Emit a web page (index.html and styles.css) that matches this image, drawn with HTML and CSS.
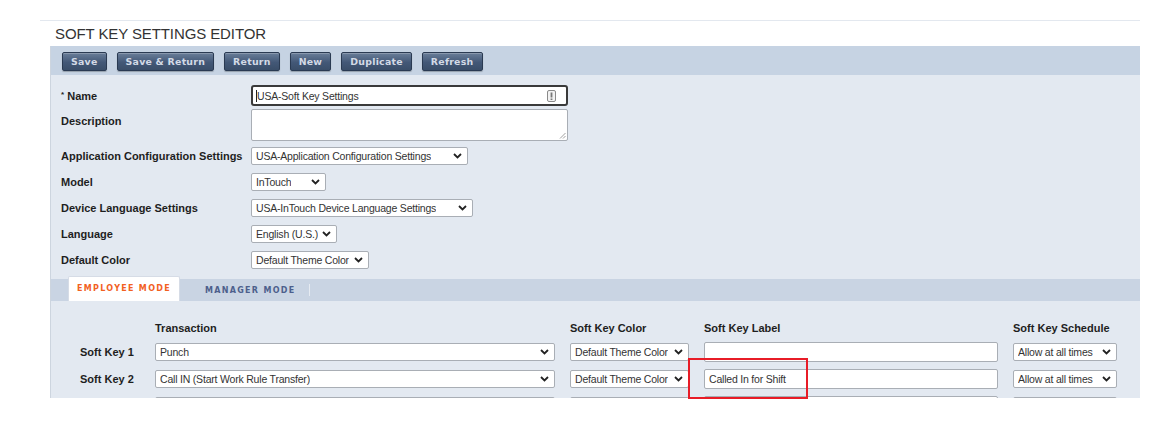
FILE: index.html
```html
<!DOCTYPE html>
<html>
<head>
<meta charset="utf-8">
<link rel="stylesheet" href="styles.css">
</head>
<body>
<div class="page">
  <div class="topline"></div>
  <h1 class="title">SOFT KEY SETTINGS EDITOR</h1>
  <div class="editor">
    <div class="toolbar">
      <button class="btn">Save</button>
      <button class="btn">Save &amp; Return</button>
      <button class="btn">Return</button>
      <button class="btn">New</button>
      <button class="btn">Duplicate</button>
      <button class="btn">Refresh</button>
    </div>
    <div class="body">
      <div class="form">
        <div class="row r-name">
          <div class="lbl"><sup class="req">*</sup> Name</div>
          <div class="txt focused w317">
            <span class="caret"></span><span>USA-Soft Key Settings</span>
            <svg class="kbd" width="9" height="12" viewBox="0 0 9 12"><rect x="0.5" y="0.5" width="8" height="11" rx="1.5" fill="#f2f2f2" stroke="#8a8a8a"/><rect x="3.6" y="2.5" width="1.8" height="5" fill="#777"/><rect x="3.6" y="8.5" width="1.8" height="1.5" fill="#777"/></svg>
          </div>
        </div>
        <div class="row r-desc">
          <div class="lbl">Description</div>
          <div class="area w317">
            <svg class="grip" width="7" height="7" viewBox="0 0 7 7"><path d="M6.5 1L1 6.5M6.5 4L4 6.5" stroke="#a0a0a0" stroke-width="1"/></svg>
          </div>
        </div>
        <div class="row r-sel">
          <div class="lbl">Application Configuration Settings</div>
          <div class="sel w217"><span>USA-Application Configuration Settings</span><svg class="chev" width="9" height="6" viewBox="0 0 9 6"><path d="M1 1l3.5 3.5L8 1" stroke="#222" stroke-width="1.8" fill="none"/></svg></div>
        </div>
        <div class="row r-sel">
          <div class="lbl">Model</div>
          <div class="sel w75"><span>InTouch</span><svg class="chev" width="9" height="6" viewBox="0 0 9 6"><path d="M1 1l3.5 3.5L8 1" stroke="#222" stroke-width="1.8" fill="none"/></svg></div>
        </div>
        <div class="row r-sel">
          <div class="lbl">Device Language Settings</div>
          <div class="sel w222"><span>USA-InTouch Device Language Settings</span><svg class="chev" width="9" height="6" viewBox="0 0 9 6"><path d="M1 1l3.5 3.5L8 1" stroke="#222" stroke-width="1.8" fill="none"/></svg></div>
        </div>
        <div class="row r-sel">
          <div class="lbl">Language</div>
          <div class="sel w86"><span>English (U.S.)</span><svg class="chev" width="9" height="6" viewBox="0 0 9 6"><path d="M1 1l3.5 3.5L8 1" stroke="#222" stroke-width="1.8" fill="none"/></svg></div>
        </div>
        <div class="row r-sel last">
          <div class="lbl">Default Color</div>
          <div class="sel w118"><span>Default Theme Color</span><svg class="chev" width="9" height="6" viewBox="0 0 9 6"><path d="M1 1l3.5 3.5L8 1" stroke="#222" stroke-width="1.8" fill="none"/></svg></div>
        </div>
      </div>

      <div class="tabs">
        <div class="tab active">EMPLOYEE MODE</div>
        <div class="tab">MANAGER MODE</div>
        <div class="tabsep"></div>
      </div>

      <div class="keys">
        <div></div>
        <div class="hd">Transaction</div>
        <div class="hd">Soft Key Color</div>
        <div class="hd">Soft Key Label</div>
        <div class="hd">Soft Key Schedule</div>

        <div class="klbl">Soft Key 1</div>
        <div class="sel"><span>Punch</span><svg class="chev" width="9" height="6" viewBox="0 0 9 6"><path d="M1 1l3.5 3.5L8 1" stroke="#222" stroke-width="1.8" fill="none"/></svg></div>
        <div class="sel"><span>Default Theme Color</span><svg class="chev" width="9" height="6" viewBox="0 0 9 6"><path d="M1 1l3.5 3.5L8 1" stroke="#222" stroke-width="1.8" fill="none"/></svg></div>
        <div class="txt"><span></span></div>
        <div class="sel"><span>Allow at all times</span><svg class="chev" width="9" height="6" viewBox="0 0 9 6"><path d="M1 1l3.5 3.5L8 1" stroke="#222" stroke-width="1.8" fill="none"/></svg></div>

        <div class="klbl">Soft Key 2</div>
        <div class="sel"><span>Call IN (Start Work Rule Transfer)</span><svg class="chev" width="9" height="6" viewBox="0 0 9 6"><path d="M1 1l3.5 3.5L8 1" stroke="#222" stroke-width="1.8" fill="none"/></svg></div>
        <div class="sel"><span>Default Theme Color</span><svg class="chev" width="9" height="6" viewBox="0 0 9 6"><path d="M1 1l3.5 3.5L8 1" stroke="#222" stroke-width="1.8" fill="none"/></svg></div>
        <div class="txt"><span>Called In for Shift</span></div>
        <div class="sel"><span>Allow at all times</span><svg class="chev" width="9" height="6" viewBox="0 0 9 6"><path d="M1 1l3.5 3.5L8 1" stroke="#222" stroke-width="1.8" fill="none"/></svg></div>

        <div></div>
        <div class="sel"></div>
        <div class="sel"></div>
        <div class="txt"></div>
        <div class="sel"></div>
      </div>
    </div>
  </div>
  <div class="highlight"></div>
</div>
</body>
</html>
```

FILE: styles.css
```css
* { box-sizing: border-box; }

body {
  margin: 0;
  background: #ffffff;
  font-family: "Liberation Sans", Arial, sans-serif;
  color: #222;
}

.page {
  position: relative;
  width: 1172px;
  height: 424px;
  overflow: hidden;
}

.topline {
  margin: 20px 32px 0 40px;
  height: 1px;
  background: #e3e8ef;
}

.title {
  margin: 0 0 0 55px;
  height: 25px;
  line-height: 25px;
  font-size: 15px;
  font-weight: normal;
  color: #333;
  letter-spacing: -0.1px;
}

.editor {
  margin-left: 50px;
  width: 1090px;
  border-left: 1px solid #cdd5df;
}

.toolbar {
  height: 29px;
  background: #c6d3e3;
  display: flex;
  align-items: flex-start;
  gap: 10px;
  padding: 6px 0 0 11px;
}

.btn {
  height: 19px;
  padding: 0 8px;
  font-family: "DejaVu Sans", Verdana, sans-serif;
  font-weight: bold;
  font-size: 9.4px;
  color: #d3dae6;
  background: linear-gradient(#6a7e99, #435877 55%, #3a4e69);
  border: 1px solid #2a3a52;
  border-radius: 2px;
  box-shadow: inset 0 1px 0 rgba(255,255,255,0.22), 0 1px 1px rgba(0,0,0,0.25);
  letter-spacing: 0.25px;
}

.body {
  background: #e3e9f1;
  height: 323px;
  overflow: hidden;
  padding-top: 10px;
}

.form {
  padding-left: 10px;
}

.row {
  display: flex;
  align-items: center;
}

.lbl {
  width: 190px;
  font-size: 11px;
  font-weight: bold;
  color: #1e1e1e;
}

.req {
  font-size: 8px;
  vertical-align: 3px;
}

.r-name { height: 21px; margin-bottom: 3px; }
.r-desc { height: 32px; margin-bottom: 6px; align-items: flex-start; }
.r-desc .lbl { padding-top: 6px; }
.r-sel { height: 18px; margin-bottom: 8px; }
.r-sel.last { margin-bottom: 10px; }

.w317 { width: 317px; }
.w217 { width: 217px; }
.w75 { width: 75px; }
.w222 { width: 222px; }
.w86 { width: 86px; }
.w118 { width: 118px; }

.txt {
  display: flex;
  align-items: center;
  height: 20px;
  background: #fff;
  border: 1px solid #a9aeb5;
  border-radius: 2px;
  padding: 0 4px;
  font-size: 10.5px;
  color: #333;
  letter-spacing: -0.2px;
}

.txt.focused {
  height: 21px;
  border: 2px solid #3a3a3a;
  border-radius: 3px;
  padding: 0 10px 0 3px;
}

.caret {
  width: 1px;
  height: 12px;
  background: #222;
}

.txt.focused span:nth-child(2) { flex: 1; }

.kbd { flex: none; }

.area {
  position: relative;
  height: 32px;
  background: #fff;
  border: 1px solid #a9aeb5;
  border-radius: 2px;
}

.grip {
  position: absolute;
  right: 1px;
  bottom: 1px;
}

.sel {
  display: flex;
  align-items: center;
  justify-content: space-between;
  height: 18px;
  background: #fff;
  border: 1px solid #a9aeb5;
  border-radius: 2px;
  padding: 0 5px 0 4px;
  font-size: 10.5px;
  color: #333;
  letter-spacing: -0.2px;
  white-space: nowrap;
  overflow: hidden;
}

.sel span { overflow: hidden; }

.chev { flex: none; margin-left: 4px; }

.tabs {
  height: 22px;
  background: #c9d4e3;
  display: flex;
  align-items: flex-end;
  padding-left: 17px;
}

.tab {
  height: 22px;
  display: flex;
  align-items: center;
  justify-content: center;
  font-family: "DejaVu Sans", Verdana, sans-serif;
  font-weight: bold;
  font-size: 8px;
  letter-spacing: 1.3px;
  color: #4d5f8c;
  padding: 0 14px 0 25px;
}

.tab.active {
  height: 25px;
  width: 112px;
  padding: 0 0 2px 0;
  background: #ffffff;
  color: #f2611f;
  border: 1px solid #d6dce6;
  border-bottom: none;
  border-radius: 2px 2px 0 0;
}

.tabsep {
  align-self: center;
  width: 1px;
  height: 12px;
  background: #e6ebf2;
}

.keys {
  display: grid;
  grid-template-columns: 60px 400px 119px 294px 104px;
  grid-template-rows: 14px 20px 20px 20px;
  column-gap: 15px;
  row-gap: 7px;
  padding: 20px 0 0 29px;
  align-items: center;
}

.hd, .klbl {
  font-size: 11px;
  font-weight: bold;
  color: #1e1e1e;
  white-space: nowrap;
}

.keys .sel { width: 100%; }
.keys .txt { width: 100%; }

.highlight {
  position: absolute;
  left: 688px;
  top: 358px;
  width: 120px;
  height: 41px;
  border: 2px solid #e81c27;
}
```
